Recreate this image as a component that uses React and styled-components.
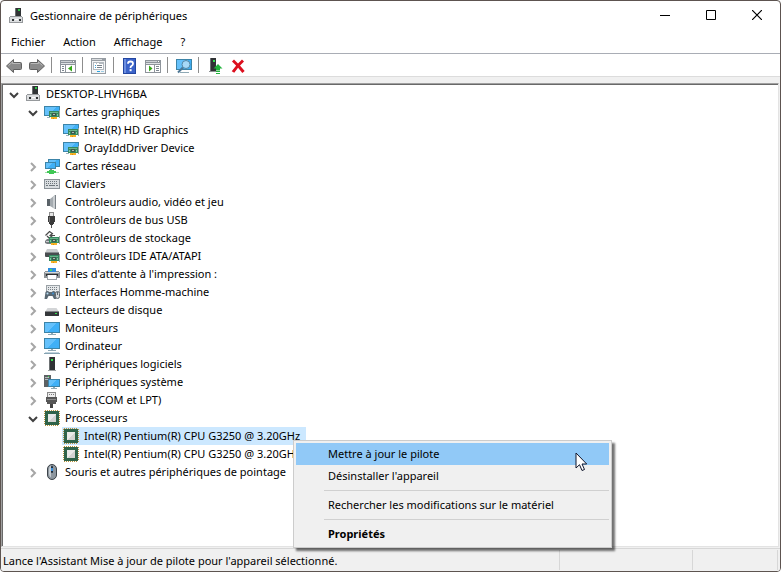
import React, { useState } from 'react'
import styled, { createGlobalStyle, css } from 'styled-components'

const GlobalStyle = createGlobalStyle`
  * {
    box-sizing: border-box;
  }
  body {
    margin: 0;
    background: #fff;
    color: #000;
    font-family: 'Noto Sans', 'Open Sans', sans-serif;
    font-size: 11px;
    line-height: 18px;
  }
  button {
    padding: 0;
    border: none;
    background: none;
    color: inherit;
    font: inherit;
  }
`;

const Window = styled.div`
  position: relative;
  min-height: 100vh;
  display: flex;
  flex-direction: column;
  border: 1px solid #5d5450;
  border-radius: 4px;
  background: #fff;
  overflow: hidden;
`;

const TitleBar = styled.header`
  display: flex;
  align-items: flex-start;
  height: 30px;
  padding-left: 7px;
`;
const Title = styled.h1`
  flex: 1;
  display: flex;
  align-items: center;
  gap: 6px;
  height: 30px;
  margin: 0;
  font-size: 11px;
  font-weight: 400;
`;
const WindowButton = styled.button`
  display: flex;
  align-items: center;
  justify-content: center;
  width: 46px;
  height: 28px;
  &:hover {
    background: ${props => (props.$danger ? '#e81123' : '#e5e5e5')};
  }
`;

const MenuBar = styled.nav`
  display: flex;
  height: 23px;
  padding-left: 1px;
  border-bottom: 1px solid #a9adb5;
`;
const MenuBarItem = styled.button`
  padding: 0 9px;
  &:hover {
    background: #e5f3ff;
  }
`;

const Toolbar = styled.div`
  display: flex;
  align-items: center;
  height: 23px;
  padding-left: 2px;
  border-bottom: 1px solid #dcdcdc;
`;
const ToolButton = styled.button`
  display: flex;
  width: 23px;
  height: 22px;
  padding: 4px 4px 2px 3px;
  &:hover {
    background: #e5f3ff;
  }
`;
const Separator = styled.span`
  width: 8px;
  height: 16px;
  padding-left: 2px;
  &::before {
    content: '';
    display: block;
    width: 1px;
    height: 100%;
    background: #8d8d8d;
  }
`;

const Client = styled.main`
  flex: 1;
  display: flex;
  padding: 6px 1px 1px 0;
  background: #f0f0f0;
`;
const TreePane = styled.div`
  flex: 1;
  padding: 1px 0 0 3px;
  border: 1px solid #e3e3e3;
  border-top-color: #a0a0a0;
  border-left-color: #a0a0a0;
  box-shadow: inset 1px 1px #696969;
  background: #fff;
`;
const Branch = styled.ul`
  margin: 0;
  padding: 0 0 0 ${props => (props.$nested ? 19 : 0)}px;
  list-style: none;
`;
const Row = styled.div`
  display: flex;
  height: 18px;
`;
const Toggle = styled.button`
  display: flex;
  align-items: center;
  width: 19px;
  height: 18px;
  padding: 2px 0 0 4px;
  color: ${props => (props.$open ? '#404040' : '#a6a6a6')};
`;
const Indent = styled.span`
  width: 19px;
`;
const NodeLabel = styled.button`
  display: flex;
  align-items: center;
  gap: 5px;
  padding: 0 6px 0 1px;
  white-space: nowrap;
  background: ${props => (props.$selected ? '#cce8ff' : 'transparent')};
`;

const StatusBar = styled.footer`
  display: flex;
  height: 23px;
  padding: 1px 2px 1px 0;
  border-top: 1px solid #d7d7d7;
  background: #f0f0f0;
`;
const StatusCell = styled.div`
  flex: ${props => (props.$width ? `0 0 ${props.$width}px` : 1)};
  padding: 2px 0 0 2px;
  border-right: 1px solid #d7d7d7;
  white-space: nowrap;
`;

const ContextMenu = styled.div`
  position: absolute;
  top: 439px;
  left: 292px;
  width: 319px;
  padding: 2px;
  border: 1px solid #ccc;
  background: #f0f0f0;
  box-shadow: 3px 3px 2px rgba(0, 0, 0, 0.55);
`;
const ContextItem = styled.button`
  display: block;
  width: 100%;
  height: 22px;
  padding-left: 32px;
  text-align: left;
  white-space: nowrap;
  ${props => props.$default && css`
    font-weight: 700;
  `}
  ${props => props.$active && css`
    background: #91c9f7;
  `}
`;
const ContextLine = styled.hr`
  height: 1px;
  margin: 3px 0 3px 28px;
  border: none;
  background: #d0d0d0;
`;
const Pointer = styled.svg`
  position: absolute;
  top: 451px;
  left: 574px;
  pointer-events: none;
`;

const Svg = ({ size = 16, children }) => (
  <svg width={size} height={size} viewBox={`0 0 ${size} ${size}`} aria-hidden="true">
    {children}
  </svg>
)

// small shared pieces

const Screen = ({ x, y, w, h }) => (
  <g shapeRendering="crispEdges">
    <rect x={x} y={y} width={w} height={h} fill="#3c84a8" />
    <rect x={x + 1} y={y + 1} width={w - 2} height={h - 2} fill="#3fb0f7" />
    <path d={`M${x + 1} ${y + 1}h${w - 5}l-${h - 3} ${h - 2}h-${w - h - 2}z`} fill="#65c1fb" />
  </g>
)

const Board = ({ y = 7 }) => (
  <g shapeRendering="crispEdges">
    <rect x="5" y={y} width="10" height="6" fill="#35895f" />
    <rect x="15" y={y - 1} width="1" height="8" fill="#98a5a0" />
    <rect x="6" y={y + 1} width="8" height="1" fill="#6bb48d" />
    <rect x="8" y={y + 2} width="4" height="3" fill="#3c5a4b" />
    <rect x="9" y={y + 3} width="2" height="1" fill="#a9c0b4" />
    <rect x="6" y={y + 3} width="1" height="2" fill="#83c39d" />
    <rect x="13" y={y + 3} width="1" height="2" fill="#83c39d" />
    <rect x="7" y={y + 6} width="6" height="2" fill="#f8b324" />
    <rect x="9" y={y + 7} width="1" height="1" fill="#d98c10" />
  </g>
)

const PcIcon = () => (
  <Svg>
    <g shapeRendering="crispEdges">
      <path d="M7 0h6v8h-6z" fill="#303335" />
      <path d="M7 0h1v8h-1z" fill="#6b6e70" />
      <rect x="10" y="1" width="2" height="2" fill="#2fc547" />
      <path d="M2 8h12v1h1v6h-14v-6h1z" fill="#96999c" />
      <path d="M2 9h12v5h-12z" fill="#dcdee0" />
      <path d="M4 11h2v2h-2zM11 11h2v2h-2z" fill="#303335" />
      <rect x="7" y="11" width="3" height="1" fill="#fff" />
    </g>
  </Svg>
)

const DisplayIcon = () => (
  <Svg>
    <Screen x={0} y={2} w={16} h={10} />
    <rect x="3" y="13" width="3" height="1" fill="#9db3be" />
    <Board />
  </Svg>
)

const NetworkIcon = () => (
  <Svg>
    <Screen x={4} y={1} w={12} h={8} />
    <Screen x={1} y={4} w={11} h={7} />
    <g shapeRendering="crispEdges">
      <path d="M6 11h2v1h-2z" fill="#7b8e97" />
      <path d="M1 14h14v1h-14z" fill="#a5dcae" />
      <path d="M5 12h5v1h2v2h-2v1h-5v-1h-2v-2h2z" fill="#3fc755" />
    </g>
  </Svg>
)

const KeyboardIcon = () => (
  <Svg>
    <g shapeRendering="crispEdges">
      <rect y="3" width="16" height="10" fill="#8b9298" />
      <rect x="1" y="4" width="14" height="8" fill="#d9dde0" />
      <path d="M2 5.500h12M2 7.500h12" stroke="#6d757b" strokeDasharray="1 1" />
      <path d="M2 9.500h2M5 9.500h6M12 9.500h2" stroke="#6d757b" />
    </g>
  </Svg>
)

const SpeakerIcon = () => (
  <Svg>
    <path d="M3 5h3v7h-3z" fill="#5a6268" />
    <path d="M6 5L11 1v14L6 12z" fill="#a5abb0" />
    <path d="M9 2.500L11 1v14L9 13.500z" fill="#c9cdd0" />
    <path d="M11.500 1v14" stroke="#7a8187" />
  </Svg>
)

const UsbIcon = () => (
  <Svg>
    <g shapeRendering="crispEdges">
      <rect x="5" y="0" width="5" height="4" fill="#8d8d8d" />
      <rect x="6" y="1" width="3" height="3" fill="#e6e6e6" />
      <path d="M4 4h7v6h-1v2h-1v1h-3v-1h-1v-2h-1z" fill="#3b3b3b" />
      <path d="M5 5h1v5h-1z" fill="#777" />
      <rect x="7" y="13" width="1" height="3" fill="#555" />
    </g>
  </Svg>
)

const StorageIcon = () => (
  <Svg>
    <path d="M1.500 5.500L5.500 1.500L9 4M3 6L6.500 9.500M6 5.500h5M8.500 3.500L6 5.500L8.500 7.500" fill="none" stroke="#4a4a4a" strokeWidth="1.200" />
    <path d="M1 11l2-2h4v5h-4l-2-1z" fill="#777c80" />
    <rect x="2" y="11" width="4" height="1" fill="#c8ccd0" />
    <Board />
  </Svg>
)

const IdeIcon = () => (
  <Svg>
    <path d="M3 1h10l2 4H1z" fill="#c9ccce" />
    <path d="M1 4.500h14v4.500H2q-1 0-1-1z" fill="#494d50" />
    <Board />
  </Svg>
)

const PrinterIcon = () => (
  <Svg>
    <g shapeRendering="crispEdges">
      <path d="M4 2h8v4h-8z" fill="#2e8ede" />
      <path d="M6 3h2v2h-2z" fill="#49d06a" />
      <path d="M1 5h3v1h8v-1h3v1h1v6h-3v-2h-10v2h-3v-6h1z" fill="#8b9195" />
      <path d="M1 6h14v1h-14z" fill="#d5d8da" />
      <path d="M2 8h12v2h-12z" fill="#2d3032" />
      <path d="M3 9h10v5h-10z" fill="#9ea4a9" />
      <path d="M4 9h8v4h-8z" fill="#fff" />
    </g>
  </Svg>
)

const HidIcon = () => (
  <Svg>
    <g shapeRendering="crispEdges">
      <rect x="2" y="1" width="14" height="8" fill="#9aa1a6" />
      <rect x="3" y="2" width="12" height="6" fill="#e5e8ea" />
      <path d="M4 3.500h10M4 5.500h10" stroke="#767e84" strokeDasharray="1 1" />
    </g>
    <path d="M1.500 8C3 6.500 4.500 7 5 8h3c.5-1 2-1.500 3.500 0L12 15h-2l-1.500-3h-4L3 15H0.500z" fill="#596873" />
    <circle cx="3.500" cy="9.500" r="1" fill="#b8dcf2" />
    <circle cx="9" cy="9.500" r="1" fill="#3d91d4" />
    <rect x="11.500" y="7.500" width="4" height="7" rx="2" fill="#d3d7da" stroke="#5d666d" />
    <path d="M13.500 8v3" stroke="#5d666d" />
  </Svg>
)

const DiskIcon = () => (
  <Svg>
    <path d="M3.500 6h9l2.500 4H1z" fill="#d3d5d7" />
    <path d="M1 9.500h14v4q0 .5-.5.500h-13q-.5 0-.5-.5z" fill="#34373a" />
    <rect x="11" y="11" width="2" height="1" fill="#35e04f" />
  </Svg>
)

const MonitorIcon = () => (
  <Svg>
    <Screen x={0} y={2} w={16} h={11} />
    <path d="M7 13h2v1h3v1h-8v-1h3z" fill="#8fa9b5" shapeRendering="crispEdges" />
  </Svg>
)

const ComputerIcon = () => (
  <Svg>
    <Screen x={0} y={0} w={16} h={11} />
    <g shapeRendering="crispEdges">
      <path d="M7 11h2v1h3v1h-8v-1h3z" fill="#8fa9b5" />
      <path d="M1 14h14v1h-14z" fill="#c0d3dd" />
      <path d="M0 15h16v1h-16z" fill="#86a3b2" />
    </g>
  </Svg>
)

const SoftwareIcon = () => (
  <Svg>
    <g shapeRendering="crispEdges">
      <rect x="5" y="1" width="6" height="13" fill="#2f3234" />
      <rect x="5" y="1" width="1" height="13" fill="#6d7173" />
      <rect x="7" y="3" width="2" height="2" fill="#35e04f" />
      <rect x="4" y="14" width="8" height="1" fill="#9ea2a4" />
    </g>
  </Svg>
)

const SystemIcon = () => (
  <Svg>
    <g shapeRendering="crispEdges">
      <rect x="0" y="1" width="7" height="12" fill="#5c6164" />
      <path d="M1 3.500h4M1 5.500h3" stroke="#b6babd" />
      <rect x="4" y="2" width="1" height="1" fill="#35e04f" />
    </g>
    <Screen x={4} y={5} w={12} h={8} />
    <path d="M9 13h2v1h2v1h-6v-1h2z" fill="#8fa9b5" shapeRendering="crispEdges" />
  </Svg>
)

const PortIcon = () => (
  <Svg>
    <g shapeRendering="crispEdges">
      <rect x="3" y="0" width="9" height="5" fill="#8b8b8b" />
      <rect x="4" y="1" width="7" height="4" fill="#ededed" />
      <path d="M5 2.500h6" stroke="#777" strokeDasharray="1 1" />
      <path d="M2 5h11v5h-1v2h-9v-2h-1z" fill="#565656" />
      <path d="M3 7.500h9" stroke="#8a8a8a" />
      <path d="M6 12h3v4h-3z" fill="#444" />
    </g>
  </Svg>
)

const CpuIcon = () => (
  <Svg>
    <g shapeRendering="crispEdges">
      <rect x="1" y="1" width="14" height="14" fill="#2f6349" />
      <path d="M1 .5h14M1 15.500h14M.5 1v14M15.500 1v14" stroke="#b8923c" strokeDasharray="1 1" />
      <rect x="4" y="4" width="8" height="8" fill="#d3d3d1" />
      <path d="M4 4h8l-8 8z" fill="#e9e9e7" />
    </g>
  </Svg>
)

const MouseIcon = () => (
  <Svg>
    <rect x="3.500" y="0.500" width="9" height="15" rx="4.500" fill="#8d969e" stroke="#3d444a" />
    <path d="M5 5q0-3 2-3.500v12q-2-1-2-4z" fill="#c5ccd1" />
    <rect x="7" y="2" width="2" height="7" rx="1" fill="#1e2c3a" />
    <rect x="7" y="4" width="2" height="3" fill="#3f91dc" />
  </Svg>
)

const ArrowIcon = ({ right }) => (
  <Svg>
    <g transform={right ? 'matrix(-1 0 0 1 16 0)' : undefined}>
      <path d="M.5 8L7.500 1.500V4.500h7q1 0 1 1v5q0 1-1 1h-7v3z" fill="#8b8b8b" stroke="#626262" />
      <path d="M2.500 7.500L6.500 4V5.500h7.500" fill="none" stroke="#b9b9b9" />
    </g>
  </Svg>
)

const PanelIcon = ({ right }) => (
  <Svg>
    <g shapeRendering="crispEdges">
      <rect y="2" width="16" height="13" fill="#8e949b" />
      <rect x="1" y="3" width="11" height="1" fill="#cdd1d5" />
      <path d="M13 3h1v1h-1z" fill="#fff" />
      <rect x="1" y="5" width="14" height="1" fill="#dfe2e5" />
      <rect x="1" y="7" width="14" height="7" fill="#fff" />
      <rect x={right ? 9 : 5} y="6" width="1" height="8" fill="#8e949b" />
      <path d={right ? 'M11 8.500h3M11 10.500h3M11 12.500h3' : 'M2 8.500h2M2 10.500h2M2 12.500h2'} stroke="#7d8790" />
    </g>
    <path d={right ? 'M4 7.500L7.500 10.500L4 13.500z' : 'M12 7.500L8 10.500L12 13.500z'} fill="#35a718" />
  </Svg>
)

const PropertiesIcon = () => (
  <Svg>
    <g shapeRendering="crispEdges">
      <rect x="0" y="0" width="15" height="16" fill="#979da3" />
      <rect x="1" y="1" width="10" height="1" fill="#d8dbde" />
      <rect x="1" y="3" width="13" height="12" fill="#f3f4f5" />
      <rect x="2" y="4" width="11" height="8" fill="#b4bac0" />
      <rect x="3" y="6" width="9" height="5" fill="#fff" />
      <path d="M3 5h2v1h-2zM6 5h2v1h-2z" fill="#fff" />
      <path d="M4 7.500h1M4 9.500h1" stroke="#3ba5de" />
      <path d="M6 7.500h5M6 9.500h5" stroke="#78828b" />
      <path d="M6 13h3v1h-3z" fill="#29a5e2" />
      <path d="M10 13h3v1h-3z" fill="#9ccce4" />
    </g>
  </Svg>
)

const HelpIcon = () => (
  <Svg>
    <rect x="1.500" y=".5" width="12" height="15" fill="#3b63c9" stroke="#2346a0" />
    <path d="M2 1h2v14h-2z" fill="#6d8fe0" />
    <path d="M6 5.800Q6 3.500 8.500 3.500T11 5.800Q11 7 9.700 7.800T8.500 10" fill="none" stroke="#fff" strokeWidth="1.800" />
    <rect x="7.600" y="11.200" width="2" height="2" fill="#fff" />
  </Svg>
)

const ScanIcon = () => (
  <Svg>
    <Screen x={0} y={1} w={16} h={11} />
    <path d="M4 14.500h9" stroke="#8fa9b5" />
    <path d="M7 9.500L2 14.500" stroke="#4e7794" strokeWidth="2" />
    <circle cx="10" cy="6.500" r="4" fill="#a6d9f8" stroke="#5487a5" />
  </Svg>
)

const UpdateIcon = () => (
  <Svg>
    <g shapeRendering="crispEdges">
      <rect x="3" y="0" width="6" height="13" fill="#2f3234" />
      <rect x="3" y="0" width="1" height="13" fill="#6d7173" />
      <rect x="6" y="2" width="2" height="2" fill="#35e04f" />
      <path d="M2 13h7v1h-7z" fill="#8d9193" />
    </g>
    <path d="M11 6l4.500 4.500h-2.500v2h-4v-2h-2.500z" fill="#22b33c" />
    <path d="M9 13.500h4M9 15.500h4" stroke="#22b33c" />
  </Svg>
)

const DeleteIcon = () => (
  <Svg>
    <path d="M3 2.500Q8 7 13.500 14M13 2.500Q7 8 3 14" fill="none" stroke="#dc0f1e" strokeWidth="3" />
  </Svg>
)

const Chevron = ({ open }) => (
  <Svg size={10}>
    <path d={open ? 'M1 3L5 7L9 3' : 'M3 1L7 5L3 9'} fill="none" stroke="currentColor" strokeWidth="2" />
  </Svg>
)

const device = {
  label: 'DESKTOP-LHVH6BA',
  icon: PcIcon,
  open: true,
  children: [
    {
      label: 'Cartes graphiques',
      icon: DisplayIcon,
      open: true,
      children: [
        { id: 'gpu0', label: 'Intel(R) HD Graphics', icon: DisplayIcon },
        { id: 'gpu1', label: 'OrayIddDriver Device', icon: DisplayIcon },
      ],
    },
    { label: 'Cartes réseau', icon: NetworkIcon, children: [] },
    { label: 'Claviers', icon: KeyboardIcon, children: [] },
    { label: 'Contrôleurs audio, vidéo et jeu', icon: SpeakerIcon, children: [] },
    { label: 'Contrôleurs de bus USB', icon: UsbIcon, children: [] },
    { label: 'Contrôleurs de stockage', icon: StorageIcon, children: [] },
    { label: 'Contrôleurs IDE ATA/ATAPI', icon: IdeIcon, children: [] },
    { label: "Files d'attente à l'impression :", icon: PrinterIcon, children: [] },
    { label: 'Interfaces Homme-machine', icon: HidIcon, children: [] },
    { label: 'Lecteurs de disque', icon: DiskIcon, children: [] },
    { label: 'Moniteurs', icon: MonitorIcon, children: [] },
    { label: 'Ordinateur', icon: ComputerIcon, children: [] },
    { label: 'Périphériques logiciels', icon: SoftwareIcon, children: [] },
    { label: 'Périphériques système', icon: SystemIcon, children: [] },
    { label: 'Ports (COM et LPT)', icon: PortIcon, children: [] },
    {
      label: 'Processeurs',
      icon: CpuIcon,
      open: true,
      children: [
        { id: 'cpu0', label: 'Intel(R) Pentium(R) CPU G3250 @ 3.20GHz', icon: CpuIcon },
        { id: 'cpu1', label: 'Intel(R) Pentium(R) CPU G3250 @ 3.20GHz', icon: CpuIcon },
      ],
    },
    { label: 'Souris et autres périphériques de pointage', icon: MouseIcon, children: [] },
  ],
}

function TreeNode({ node, selected, onSelect }) {
  const [open, setOpen] = useState(Boolean(node.open))
  const id = node.id || node.label
  const Icon = node.icon

  return (
    <li>
      <Row>
        {node.children ? (
          <Toggle $open={open} aria-expanded={open} aria-label={node.label} onClick={() => setOpen(!open)}>
            <Chevron open={open} />
          </Toggle>
        ) : (
          <Indent />
        )}
        <NodeLabel $selected={selected === id} onClick={() => onSelect(id)}>
          <Icon />
          {node.label}
        </NodeLabel>
      </Row>
      {open && node.children.length > 0 && (
        <Branch $nested>
          {node.children.map(child => (
            <TreeNode key={child.id || child.label} node={child} selected={selected} onSelect={onSelect} />
          ))}
        </Branch>
      )}
    </li>
  )
}

export default function App() {
  const [selected, setSelected] = useState('cpu0')
  const [active, setActive] = useState(0)

  return (
    <Window>
      <GlobalStyle />
      <TitleBar>
        <Title>
          <PcIcon />
          Gestionnaire de périphériques
        </Title>
        <WindowButton aria-label="Réduire">
          <Svg size={10}><path d="M0 5.500h10" stroke="#000" /></Svg>
        </WindowButton>
        <WindowButton aria-label="Agrandir">
          <Svg size={10}><path d="M.5 .5h9v9h-9z" fill="none" stroke="#000" /></Svg>
        </WindowButton>
        <WindowButton $danger aria-label="Fermer">
          <Svg size={10}><path d="M0 0L10 10M10 0L0 10" stroke="#000" strokeWidth="1.200" /></Svg>
        </WindowButton>
      </TitleBar>

      <MenuBar>
        <MenuBarItem>Fichier</MenuBarItem>
        <MenuBarItem>Action</MenuBarItem>
        <MenuBarItem>Affichage</MenuBarItem>
        <MenuBarItem>?</MenuBarItem>
      </MenuBar>

      <Toolbar>
        <ToolButton aria-label="Précédent"><ArrowIcon /></ToolButton>
        <ToolButton aria-label="Suivant"><ArrowIcon right /></ToolButton>
        <Separator />
        <ToolButton aria-label="Arborescence"><PanelIcon /></ToolButton>
        <Separator />
        <ToolButton aria-label="Propriétés"><PropertiesIcon /></ToolButton>
        <Separator />
        <ToolButton aria-label="Aide"><HelpIcon /></ToolButton>
        <ToolButton aria-label="Volet Actions"><PanelIcon right /></ToolButton>
        <Separator />
        <ToolButton aria-label="Rechercher"><ScanIcon /></ToolButton>
        <Separator />
        <ToolButton aria-label="Mettre à jour"><UpdateIcon /></ToolButton>
        <ToolButton aria-label="Désinstaller"><DeleteIcon /></ToolButton>
      </Toolbar>

      <Client>
        <TreePane>
          <Branch>
            <TreeNode node={device} selected={selected} onSelect={setSelected} />
          </Branch>
        </TreePane>
      </Client>

      <StatusBar>
        <StatusCell>Lance l'Assistant Mise à jour de pilote pour l'appareil sélectionné.</StatusCell>
        <StatusCell $width={133} />
        <StatusCell $width={85} />
      </StatusBar>

      <ContextMenu>
        <ContextItem $active={active === 0} onMouseEnter={() => setActive(0)}>Mettre à jour le pilote</ContextItem>
        <ContextItem $active={active === 1} onMouseEnter={() => setActive(1)}>Désinstaller l'appareil</ContextItem>
        <ContextLine />
        <ContextItem $active={active === 2} onMouseEnter={() => setActive(2)}>
          Rechercher les modifications sur le matériel
        </ContextItem>
        <ContextLine />
        <ContextItem $default $active={active === 3} onMouseEnter={() => setActive(3)}>Propriétés</ContextItem>
      </ContextMenu>
      <Pointer width="13" height="20" viewBox="0 0 13 20">
        <path d="M1 1v15l3.500-3.300L7 18.500l2.500-1L7 12h4.700z" fill="#fff" stroke="#10162c" />
      </Pointer>
    </Window>
  )
}
